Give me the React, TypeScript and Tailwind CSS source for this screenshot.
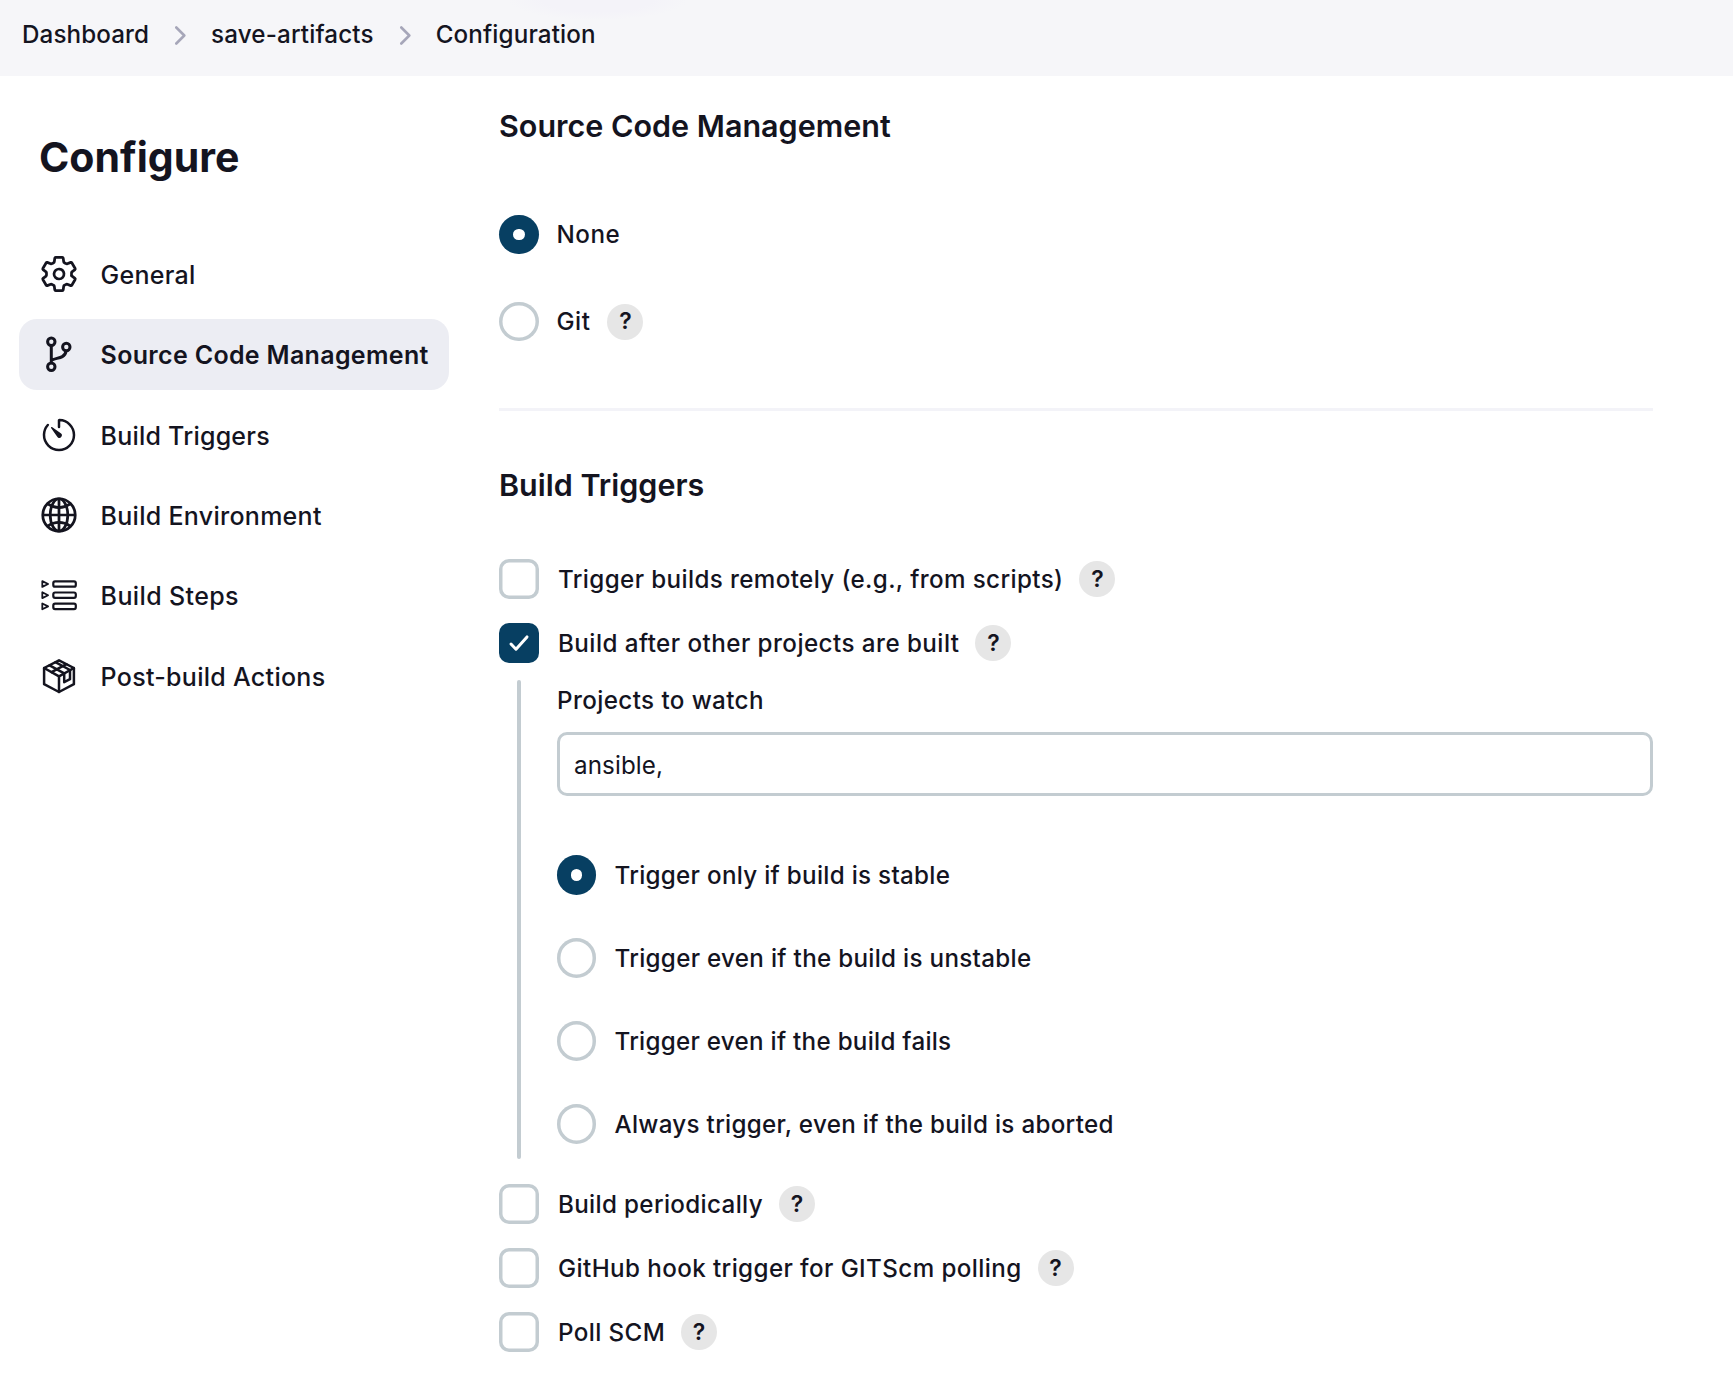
import type { ReactNode } from "react";
import { IoGlobeOutline, IoSettingsOutline, IoTimerOutline } from "react-icons/io5";

function BranchIcon() {
  return (
    <svg className="size-10" viewBox="0 0 40 40" fill="none" stroke="currentColor" strokeWidth="3" strokeLinecap="round">
      <circle cx="12.3" cy="7.8" r="3.7" />
      <circle cx="12.3" cy="32.8" r="3.7" />
      <circle cx="27.3" cy="13" r="3.7" />
      <path d="M12.3 11.8v17M12.3 26.6c1.6-1.8 8.2-2.3 11-4 2.3-1.4 3.4-3.1 3.7-5.4" />
    </svg>
  );
}

function StepsIcon() {
  return (
    <svg className="size-10" viewBox="0 0 40 40" fill="none" stroke="currentColor" strokeWidth="2.2" strokeLinejoin="round">
      {[5.3, 16.5, 27.7].map((y) => (
        <g key={y}>
          <rect x="14.3" y={y} width="22.5" height="5.4" rx="1.8" />
          <path strokeWidth="1.8" d={`M3.3 ${y - 0.2}v5.8l5.8-2.9z`} />
        </g>
      ))}
    </svg>
  );
}

function PackageIcon() {
  return (
    <svg className="size-10" viewBox="0 0 40 40" fill="none" stroke="currentColor" strokeWidth="2.5" strokeLinejoin="round" strokeLinecap="round">
      <path d="M20 4.3 34.9 12v16.2L20 36 5.1 28.2V12z" />
      <path d="M5.1 12 20 20.3 34.9 12M20 20.3V36" />
      <path d="M10.6 9.3 25.2 17.3v8.9l5.8-3V14L16.4 6.2M12.6 16.2 27.4 8.2" />
    </svg>
  );
}

function Crumb() {
  return (
    <svg className="mr-[25px] ml-6 h-5 w-3 shrink-0" viewBox="0 0 12 20" fill="none" stroke="#a6a6b9" strokeWidth="2.6" strokeLinecap="round" strokeLinejoin="round">
      <path d="M2.3 1.5l8 8-8 8" />
    </svg>
  );
}

function Help() {
  return (
    <button type="button" className="ml-4 flex size-9 items-center justify-center rounded-full bg-[#e6e6e6] text-[23px] leading-none font-semibold">
      ?
    </button>
  );
}

function Radio({ checked, small, text, help }: { checked?: boolean; small?: boolean; text: ReactNode; help?: boolean }) {
  return (
    <div className={small ? "flex h-10 items-center" : "flex h-[39px] items-center"}>
      <span
        className={
          (small ? "mr-[18.5px] h-10 w-[39px] " : "mr-[17.5px] h-[39px] w-10 ") +
          (checked ? "flex shrink-0 items-center justify-center rounded-full bg-[#073f62]" : "shrink-0 rounded-full shadow-[inset_0_0_0_3.5px_#c3ccd1]")
        }
      >
        {checked && <span className="size-[11.5px] rounded-full bg-white" />}
      </span>
      <span className="pt-[1.5px]">{text}</span>
      {help && <Help />}
    </div>
  );
}

function Check({ checked, text }: { checked?: boolean; text: ReactNode }) {
  return (
    <div className="flex h-10 items-center">
      <span
        className={
          checked
            ? "mr-[19px] flex size-10 shrink-0 items-center justify-center rounded-[10px] bg-[#073f62]"
            : "mr-[19px] size-10 shrink-0 rounded-[10px] shadow-[inset_0_0_0_3.5px_#c3ccd1]"
        }
      >
        {checked && (
          <svg className="size-10" viewBox="0 0 40 40" fill="none" stroke="#fff" strokeWidth="3" strokeLinecap="round" strokeLinejoin="round">
            <path d="M12 21l5 5.2L28 13.9" />
          </svg>
        )}
      </span>
      <span className="pt-[1.5px]">{text}</span>
      <Help />
    </div>
  );
}

const items = [
  { icon: <IoSettingsOutline className="size-10 [&_*]:[stroke-width:35px]" />, label: "General", cls: "tracking-[0.24px]" },
  { icon: <BranchIcon />, label: "Source Code Management", cls: "font-semibold tracking-[0.32px]", active: true },
  { icon: <IoTimerOutline className="size-10" />, label: "Build Triggers", cls: "tracking-[0.22px]" },
  { icon: <IoGlobeOutline className="size-10 [&_*]:[stroke-width:35px]" />, label: "Build Environment", cls: "tracking-[0.28px]" },
  { icon: <StepsIcon />, label: "Build Steps", cls: "tracking-[0.38px]" },
  { icon: <PackageIcon />, label: "Post-build Actions", cls: "tracking-[0.29px]" },
];

export default function App() {
  return (
    <div className="h-[1389px] w-[1733px] overflow-hidden bg-white font-['Inter',sans-serif] text-[24.2px] font-medium whitespace-nowrap text-[#14141f]">
      <header className="flex h-[76px] items-center bg-[#f6f6f9] bg-[radial-gradient(ellipse_90px_20px_at_598px_0px,#f4f3f9_60%,#f6f6f9_100%)] pb-[5px] pl-[22px]">
        <span className="tracking-[0.1px]">Dashboard</span>
        <span className="w-px" />
        <Crumb />
        <span className="tracking-[0.15px]">save-artifacts</span>
        <span className="w-px" />
        <Crumb />
        <span className="tracking-[0.13px]">Configuration</span>
      </header>
      <div className="flex">
        <aside className="w-[499px] shrink-0 pt-[56px] pl-[19px]">
          <h1 className="pl-5 text-[41px] leading-[50px] font-bold">Configure</h1>
          <nav className="mt-[56.6px] flex w-[430px] flex-col gap-[9.4px]">
            {items.map((it) => (
              <a
                key={it.label}
                className={
                  it.active
                    ? "flex h-[71px] items-center gap-[21.6px] rounded-[18px] bg-[#ecedf3] pl-5 text-[25px]"
                    : "flex h-[71px] items-center gap-[21.6px] rounded-[18px] pl-5 text-[25px]"
                }
              >
                <span className="shrink-0">{it.icon}</span>
                <span className={"pt-[3px] " + it.cls}>{it.label}</span>
              </a>
            ))}
          </nav>
        </aside>
        <main className="flex-1 pt-8 pr-20">
          <h2 className="text-[30.5px] leading-9 font-semibold">Source Code Management</h2>
          <div className="mt-[71px] flex flex-col gap-12">
            <Radio checked text={<span className="tracking-[0.5px]">None</span>} />
            <Radio help text={<span className="mr-px tracking-[0.5px]">Git</span>} />
          </div>
          <hr className="mt-[67px] h-[3px] border-0 bg-[#f3f3f8]" />
          <h2 className="mt-14 text-[30.5px] leading-9 font-semibold">Build Triggers</h2>
          <div className="mt-14 flex flex-col gap-6">
            <Check text={<span className="tracking-[0.38px]">Trigger builds remotely (e.g., from scripts)</span>} />
            <Check checked text={<span className="tracking-[0.45px]">Build after other projects are built</span>} />
          </div>
          <div className="mt-[17px] ml-[18px] flex h-[479px]">
            <div className="w-1 shrink-0 rounded-full bg-[#c3ccd1]" />
            <div className="ml-9 flex-1 pt-[5px]">
              <label className="block leading-[31px] tracking-[0.4px]">Projects to watch</label>
              <input
                defaultValue="ansible,"
                className="mt-4 block h-16 w-full rounded-[10px] border-3 border-[#c3ccd1] bg-white px-3.5 pt-0.5 font-normal tracking-[0.1px] outline-none"
              />
              <div className="mt-[59px] flex flex-col gap-[43px]">
                <Radio small checked text={<span className="tracking-[0.29px]">Trigger only if build is stable</span>} />
                <Radio small text={<span className="tracking-[0.3px]">Trigger even if the build is unstable</span>} />
                <Radio small text={<span className="tracking-[0.27px]">Trigger even if the build fails</span>} />
                <Radio small text={<span className="tracking-[0.3px]">Always trigger, even if the build is aborted</span>} />
              </div>
            </div>
          </div>
          <div className="mt-[25px] flex flex-col gap-6">
            <Check text={<span className="tracking-[0.34px]">Build periodically</span>} />
            <Check text={<span className="tracking-[0.4px]">GitHub hook trigger for GITScm polling</span>} />
            <Check text={<span className="tracking-[0.38px]">Poll SCM</span>} />
          </div>
        </main>
      </div>
    </div>
  );
}
